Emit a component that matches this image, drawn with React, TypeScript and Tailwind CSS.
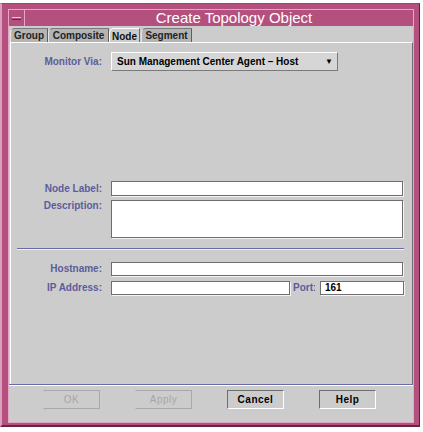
const font = "font-['Liberation_Sans',Arial,sans-serif]";

type FieldProps = {
  label: string;
  children: React.ReactNode;
  top?: boolean;
};

function Field(props: FieldProps) {
  return (
    <div className={`flex ${props.top ? "items-start" : "items-center"}`}>
      <span className="w-[92px] shrink-0 pr-[1px] text-right text-[10px] font-bold leading-[12px] text-[#5c5c9c]">
        {props.label}
      </span>
      <div className="ml-[8px] flex items-center">{props.children}</div>
    </div>
  );
}

function TextBox(props: { w: string; h: string; value?: string }) {
  return (
    <div
      className={`${props.w} ${props.h} border border-[#6e6e6e] bg-white pl-[4px] text-[10px] font-bold leading-[12px] text-black shadow-[1px_1px_0_#f4f4f4]`}
    >
      {props.value}
    </div>
  );
}

function Tab(props: { label: string; w: string; active?: boolean }) {
  if (props.active)
    return (
      <div
        className={`${props.w} -mb-[1px] flex h-[15px] items-center justify-center rounded-tl-[5px] border-l border-t border-r border-l-white border-t-white border-r-[#6e6e6e] bg-[#cccccc] text-[10px] font-bold text-[#111]`}
      >
        {props.label}
      </div>
    );
  return (
    <div
      className={`${props.w} mt-[1px] flex h-[14px] items-center justify-center rounded-tl-[5px] border-l border-t border-r border-l-[#e6e6e6] border-t-[#7a7a7a] border-r-[#5e5e5e] bg-[#b4b4b4] text-[10px] font-bold text-[#222]`}
    >
      {props.label}
    </div>
  );
}

function Button(props: { label: string; ml: string; disabled?: boolean }) {
  const look = props.disabled
    ? "border-t-[#a8a8a8] border-r-[#a8a8a8] border-b-[#a8a8a8] border-l-transparent text-[#a6a6a6] font-normal"
    : "border-t-[#6e6e6e] border-l-[#6e6e6e] border-r-white border-b-white text-black font-bold";
  return (
    <div
      className={`${props.ml} flex h-[19px] w-[57px] items-center justify-center border text-[10px] tracking-[0.5px] ${look}`}
    >
      {props.label}
    </div>
  );
}

export default function App() {
  return (
    <div className={`h-[432px] w-[423px] bg-white pt-[3px] ${font}`}>
      <div className="h-[424px] w-[420px] border-l-2 border-r border-b-2 border-t border-l-[#dc9fbd] border-t-[#a0406c] border-r-[#5f1f3f] border-b-[#6a2447] bg-[#b4507d] pb-[2px] pl-[6px] pr-[5px] pt-[5px]">
        <div className="flex h-[414px] w-[406px] flex-col border border-[#e3a9c4]">
          {/* title bar */}
          <div className="flex h-[16px] shrink-0 bg-[#b4507d]">
            <div className="flex w-[16px] items-center justify-center border-r border-[#e3a9c4]">
              <div className="h-[3px] w-[9px] border-b border-t border-b-[#6a2447] border-t-[#f0c4d8]" />
            </div>
            <div className="flex flex-1 items-center justify-center pl-[30px] text-[15px] leading-[16px] text-white">
              Create Topology Object
            </div>
          </div>

          {/* body */}
          <div className="flex flex-1 flex-col bg-[#cccccc]">
            <div className="flex h-[16px] items-end pl-[1px] pt-[1px]">
              <Tab label="Group" w="w-[38px]" />
              <Tab label="Composite" w="w-[61px]" />
              <Tab label="Node" w="w-[31px]" active />
              <div className="w-[1px]" />
              <Tab label="Segment" w="w-[51px]" />
            </div>

            <div className="ml-[1px] flex h-[342px] w-[403px] flex-col border-r border-t border-l border-t-white border-l-white border-r-[#6e6e6e] pt-[9px]">
              <Field label="Monitor Via:">
                <div className="flex h-[19px] w-[227px] items-center justify-between border border-l-white border-t-white border-r-[#7a7a7a] border-b-[#7a7a7a] bg-[#d6d6d6] pl-[5px] pr-[4px] text-[10px] font-bold text-black">
                  <span>Sun Management Center Agent – Host</span>
                  <span className="text-[8px]">▼</span>
                </div>
              </Field>

              <div className="mt-[110px] flex flex-col gap-[4px]">
                <Field label="Node Label:">
                  <TextBox w="w-[292px]" h="h-[15px]" />
                </Field>
                <Field label="Description:" top>
                  <TextBox w="w-[292px]" h="h-[38px]" />
                </Field>
              </div>

              <div className="ml-[6px] mt-[10px] h-[1px] w-[387px] bg-[#6a6aa8] shadow-[0_1px_0_#f0f0f0]" />

              <div className="mt-[13px] flex flex-col gap-[5px]">
                <Field label="Hostname:">
                  <TextBox w="w-[292px]" h="h-[14px]" />
                </Field>
                <Field label="IP Address:">
                  <TextBox w="w-[179px]" h="h-[14px]" />
                  <span className="ml-[3px] w-[22px] overflow-hidden whitespace-nowrap text-[10px] font-bold leading-[14px] text-[#5c5c9c]">
                    Port:
                  </span>
                  <div className="ml-[5px]">
                    <TextBox w="w-[84px]" h="h-[14px]" value="161" />
                  </div>
                </Field>
              </div>
            </div>

            <div className="h-[1px] w-full bg-[#6a6aa8]" />
            <div className="h-[1px] w-full bg-white" />

            <div className="flex pt-[4px]">
              <Button label="OK" ml="ml-[34px]" disabled />
              <Button label="Apply" ml="ml-[35px]" disabled />
              <Button label="Cancel" ml="ml-[35px]" />
              <Button label="Help" ml="ml-[35px]" />
            </div>
          </div>
        </div>
      </div>
    </div>
  );
}
